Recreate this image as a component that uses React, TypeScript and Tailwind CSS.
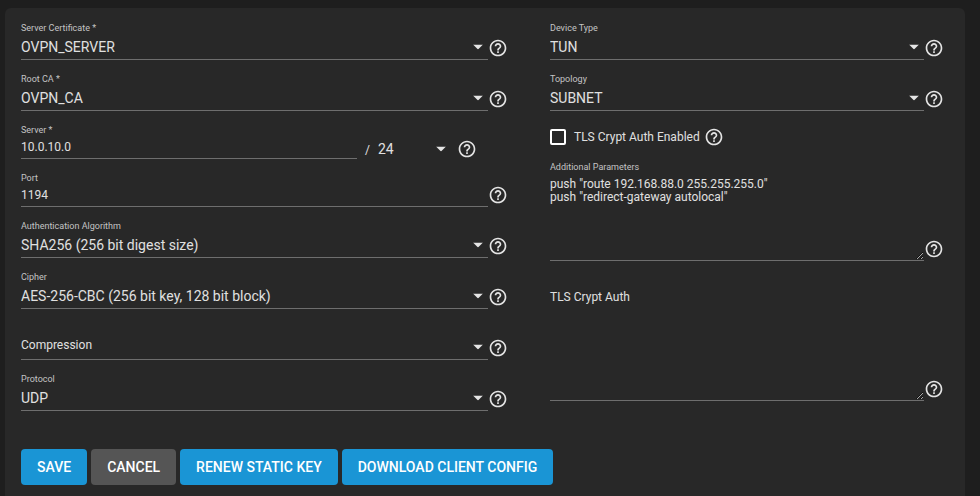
import React, { useState } from 'react';

const FONT = "font-['Roboto','Liberation_Sans',sans-serif]";

function HelpButton({ topic }: { topic: string }) {
	return (
		<button type="button" aria-label={`Help: ${topic}`} className="block shrink-0 text-[#e4e4e4]">
			<svg viewBox="0 0 24 24" className="block size-5" fill="currentColor">
				<path d="M11 18h2v-2h-2v2zm1-16C6.48 2 2 6.48 2 12s4.48 10 10 10 10-4.48 10-10S17.52 2 12 2zm0 18c-4.41 0-8-3.59-8-8s3.59-8 8-8 8 3.59 8 8-3.59 8-8 8zm0-14c-2.21 0-4 1.79-4 4h2c0-1.1.9-2 2-2s2 .9 2 2c0 2-3 1.75-3 5h2c0-2.25 3-2.5 3-5 0-2.21-1.79-4-4-4z" />
			</svg>
		</button>
	);
}

function Arrow() {
	return (
		<svg viewBox="0 0 10 5" className="pointer-events-none absolute right-[5px] top-1/2 h-[5px] w-2.5 -translate-y-1/2" fill="#e4e4e4">
			<path d="M0 0h10L5 5z" />
		</svg>
	);
}

interface SelectFieldProps {
	id: string;
	label: string;
	value?: string;
}

// without a value the label itself rests on the line, as the placeholder option
function SelectField({ id, label, value }: SelectFieldProps) {
	return (
		<div className="mb-[13px] flex items-end">
			<div className="min-w-0 flex-1">
				<div className="h-3 text-[9px] leading-3 text-[#c4c4c4]">
					{value && <label htmlFor={id} className="block">{label}</label>}
				</div>
				<div className="relative border-b border-[#6e6e6e]">
					<select
						id={id}
						aria-label={value ? undefined : label}
						defaultValue={value ?? ''}
						className={`block h-[25px] w-full appearance-none bg-transparent pr-5 outline-none ${value ? 'text-sm' : 'pb-[3px] text-xs'}`}
					>
						<option value={value ?? ''}>{value ?? label}</option>
					</select>
					<Arrow />
				</div>
			</div>
			<div className="pb-0.5">
				<HelpButton topic={label} />
			</div>
		</div>
	);
}

function InputField({ id, label, value }: { id: string; label: string; value: string }) {
	return (
		<div className="min-w-0 flex-1">
			<label htmlFor={id} className="block text-[9px] leading-3 text-[#c4c4c4]">{label}</label>
			<input
				id={id}
				type="text"
				defaultValue={value}
				className="block h-[23px] w-full border-b border-[#6e6e6e] bg-transparent text-xs outline-none"
			/>
		</div>
	);
}

interface TextAreaFieldProps {
	id: string;
	label: string;
	value: string;
	labelClass: string;
}

function TextAreaField({ id, label, value, labelClass }: TextAreaFieldProps) {
	return (
		<div className="flex items-end">
			<div className="min-w-0 flex-1">
				<label htmlFor={id} className={`block leading-3 ${labelClass}`}>{label}</label>
				<textarea
					id={id}
					defaultValue={value}
					className="block h-[88px] w-full resize-y border-b border-[#6e6e6e] bg-transparent pt-[5px] text-xs leading-[13px] outline-none"
				/>
			</div>
			<div className="pb-0.5">
				<HelpButton topic={label} />
			</div>
		</div>
	);
}

function ActionButton({ label, secondary }: { label: string; secondary?: boolean }) {
	return (
		<button
			type="button"
			className={`h-9 rounded px-4 text-sm font-medium whitespace-nowrap text-white ${secondary ? 'bg-[#555555]' : 'bg-[#1a95d5]'}`}
		>
			{label}
		</button>
	);
}

const PUSH_PARAMS = 'push "route 192.168.88.0 255.255.255.0"\npush "redirect-gateway autolocal"';

export default function App() {
	const [tlsCrypt, setTlsCrypt] = useState(false);

	return (
		<div className={`flex min-h-screen flex-col bg-[#1e1e1e] pt-2 pr-[15px] pl-[5px] text-[#e0e0e0] ${FONT}`}>
			<form className="flex-1 rounded-t-md bg-[#282828] px-4 pt-3.5 pb-2">
				<div className="flex gap-[42px] pr-[5px]">
					<div className="min-w-0 flex-[487]">
						<SelectField id="server-cert" label="Server Certificate *" value="OVPN_SERVER" />
						<SelectField id="root-ca" label="Root CA *" value="OVPN_CA" />

						<div className="mb-[13px] flex items-end pr-[31px]">
							<InputField id="server" label="Server *" value="10.0.10.0" />
							<span className="px-2 text-xs leading-[18px]">/</span>
							<div className="relative mr-1.5 w-[73px]">
								<select
									aria-label="Netmask"
									defaultValue="24"
									className="block h-5 w-full appearance-none bg-transparent text-sm leading-5 outline-none"
								>
									<option value="24">24</option>
								</select>
								<Arrow />
							</div>
							<HelpButton topic="Server" />
						</div>

						<div className="mb-[13px] flex items-end">
							<InputField id="port" label="Port" value="1194" />
							<div className="pb-0.5">
								<HelpButton topic="Port" />
							</div>
						</div>

						<SelectField id="auth" label="Authentication Algorithm" value="SHA256 (256 bit digest size)" />
						<SelectField id="cipher" label="Cipher" value="AES-256-CBC (256 bit key, 128 bit block)" />
						<SelectField id="compression" label="Compression" />
						<SelectField id="protocol" label="Protocol" value="UDP" />
					</div>

					<div className="min-w-0 flex-[394]">
						<SelectField id="device-type" label="Device Type" value="TUN" />
						<SelectField id="topology" label="Topology" value="SUBNET" />

						<div className="mt-4 mb-3.5 flex items-center gap-1">
							<label className="flex items-center gap-2 text-xs">
								<input
									type="checkbox"
									checked={tlsCrypt}
									onChange={(e) => setTlsCrypt(e.target.checked)}
									className="size-4 appearance-none rounded-xs border-2 border-white checked:bg-[#1a95d5]"
								/>
								TLS Crypt Auth Enabled
							</label>
							<HelpButton topic="TLS Crypt Auth Enabled" />
						</div>

						<TextAreaField id="params" label="Additional Parameters" value={PUSH_PARAMS} labelClass="text-[9px] text-[#c4c4c4]" />
						<div className="mt-[30px]">
							<TextAreaField id="tls-crypt" label="TLS Crypt Auth" value="" labelClass="h-[22px] text-xs" />
						</div>
					</div>
				</div>

				<div className="mt-[25px] flex flex-wrap gap-1">
					<ActionButton label="SAVE" />
					<ActionButton label="CANCEL" secondary />
					<ActionButton label="RENEW STATIC KEY" />
					<ActionButton label="DOWNLOAD CLIENT CONFIG" />
				</div>
			</form>
		</div>
	);
}
